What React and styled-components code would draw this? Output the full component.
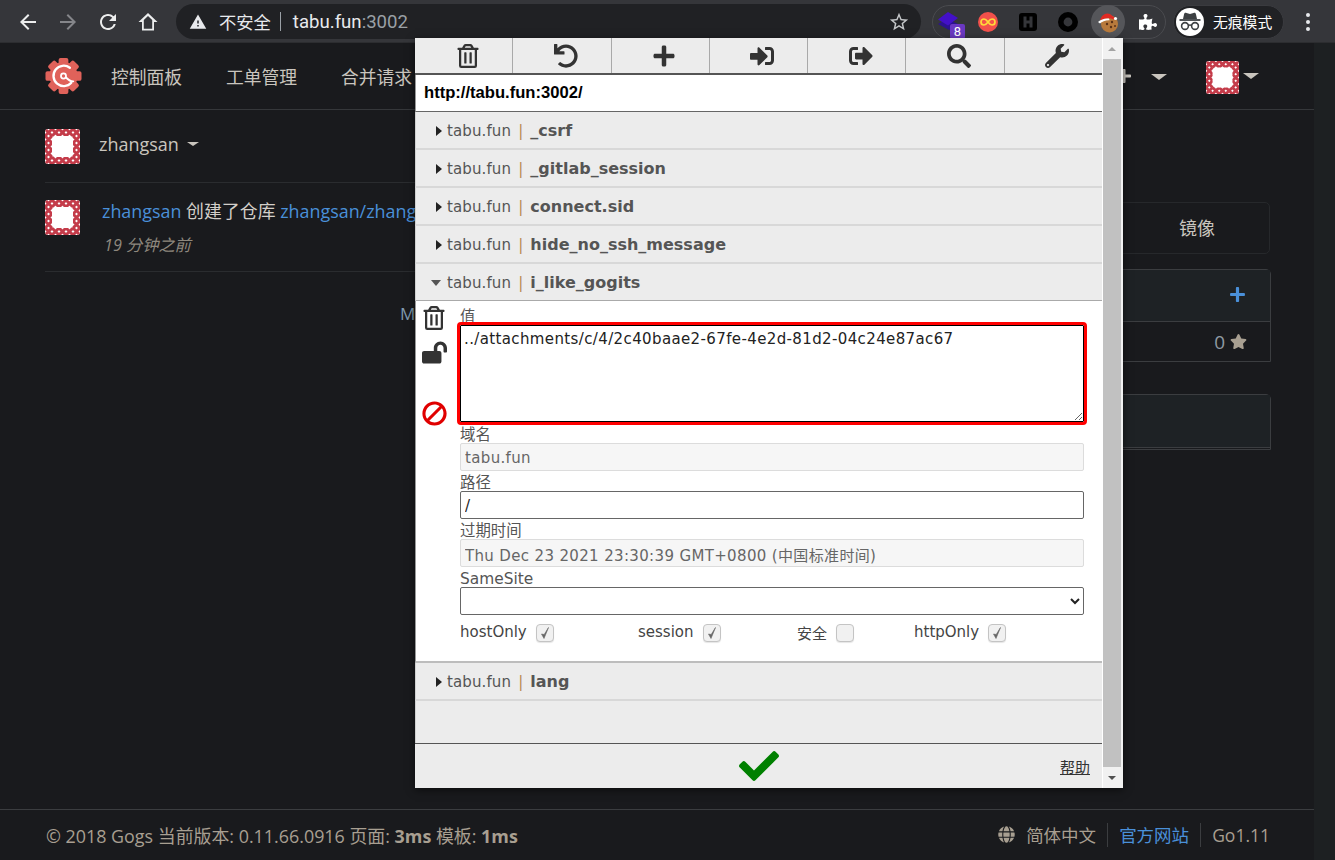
import React from "react";
import styled, { createGlobalStyle } from "styled-components";
import { MdArrowBack, MdArrowForward, MdRefresh, MdWarning, MdStarBorder } from "react-icons/md";
import {
  FaRegTrashAlt, FaUndo, FaPlus, FaSignInAlt, FaSignOutAlt, FaSearch, FaWrench,
  FaLockOpen, FaBan, FaCheck, FaGlobe, FaStar, FaPuzzlePiece,
} from "react-icons/fa";

const PAGE_FONT = '"Open Sans","Noto Sans CJK SC",sans-serif';
const UI_FONT = '"DejaVu Sans","Noto Sans CJK SC",sans-serif';

const Global = createGlobalStyle`
  html, body { margin: 0; padding: 0; background: #191a1d; }
  * { box-sizing: border-box; }
  body { font-family: ${PAGE_FONT}; overflow: hidden; }
`;

const Screen = styled.div`
  position: relative; width: 1335px; height: 860px; overflow: hidden;
  display: flex; flex-direction: column; background: #191a1d;
`;

/* browser chrome */
const Toolbar = styled.div`
  height: 43px; flex: none; background: #35363a; display: flex; align-items: center; color: #fff;
  padding-left: 16px; box-shadow: inset 0 -1px 0 #2c2d30;
`;
const NavBtn = styled.span`
  width: 24px; height: 24px; margin-right: ${(p) => p.$mr || 16}px; display: flex;
  color: ${(p) => (p.$dim ? "#85868a" : "#eceded")}; font-size: 24px;
`;
const Omni = styled.div`
  width: 745px; height: 35px; border-radius: 18px; background: #202124;
  display: flex; align-items: center; padding-left: 13px; font-size: 18.6px; color: #e8eaed;
  font-family: "Roboto","Noto Sans CJK SC",sans-serif; flex: none;
`;
const OmniSep = styled.span`width: 1px; height: 19px; background: #9aa0a6; margin: 0 12px 0 9px;`;
const OmniPort = styled.span`color: #9aa0a6;`;
const OmniLabel = styled.span`margin-left: 12px; font-size: 17.3px;`;
const OmniStar = styled.span`margin-left: auto; margin-right: 11px; display: flex; font-size: 22px; color: #c4c7c9;`;
const ExtPill = styled.div`
  width: 234px; height: 34px; margin-left: 11px; border: 1px solid #4a4b4f; border-radius: 17px;
  display: flex; align-items: center; flex: none;
`;
const ExtSlot = styled.span`
  position: relative; width: 40px; height: 34px; display: flex; align-items: center; justify-content: center; flex: none;
  &:first-child { margin-left: -5px; }
`;
const ExtActive = styled.span`
  width: 34px; height: 34px; border-radius: 50%; background: #55565a; display: flex; align-items: center; justify-content: center;
`;
const Badge = styled.span`
  position: absolute; left: 22px; top: 19px; width: 15px; height: 15px; background: #6a38c2; color: #fff;
  font: 13px/15px "Roboto",sans-serif; text-align: center; border-radius: 2px;
`;
const IncogPill = styled.div`
  width: 111px; height: 34px; margin-left: 7px; border-radius: 17px; background: #202124; border: 1px solid #3a3b3f;
  display: flex; align-items: center; padding-left: 2px; color: #fff; font-size: 14.8px; flex: none;
  font-family: "Noto Sans CJK SC",sans-serif;
`;
const IncogFace = styled.span`
  width: 28px; height: 28px; border-radius: 50%; background: #fff; display: flex; align-items: center; justify-content: center; margin-right: 9px;
`;
const Kebab = styled.span`
  margin-left: 22px; display: flex; flex-direction: column; gap: 3px;
  & i { display: block; width: 4px; height: 4px; border-radius: 50%; background: #e8eaed; }
`;

/* page */
const Body = styled.div`flex: 1; display: flex; min-height: 0;`;
const Main = styled.div`flex: 1; display: flex; flex-direction: column; min-width: 0;`;
const PageScroll = styled.div`width: 21px; flex: none; background: #1d2022;`;
const Header = styled.div`
  height: 67px; flex: none; border-bottom: 1px solid #35373a; display: flex; align-items: center; padding: 0 0 0 45px;
  color: #c9c5be; position: relative;
`;
const NavItem = styled.span`width: 115px; font-size: 17.8px; flex: none; white-space: nowrap; font-family: "Noto Sans CJK SC",sans-serif;`;
const LogoBox = styled.span`width: 66px; flex: none; display: flex;`;
const RightNav = styled.div`margin-left: auto; display: flex; align-items: center; padding-right: 55px;`;
const Caret = styled.i`
  display: block; width: 0; height: 0; border-left: ${(p) => p.$s || 8}px solid transparent; border-right: ${(p) => p.$s || 8}px solid transparent;
  border-top: ${(p) => (p.$s || 8) * 0.8}px solid ${(p) => p.$c || "#c9c5be"};
`;
const PlusMark = styled.span`display: flex; color: #c9c5be; font-size: 16px; margin-right: 15px;`;
const Spacer = styled.span`width: ${(p) => p.$w}px; flex: none;`;
const NudgedCaret = styled.span`margin-left: 4px; margin-top: ${(p) => p.$mt || 0}px;`;
const AvatarSlot = styled.span`display: flex; margin-top: 3px;`;

const Content = styled.div`flex: 1; display: flex; padding: 0 43px 0 45px; gap: 16px; min-height: 0;`;
const LeftCol = styled.div`width: 790px; flex: none;`;
const RightCol = styled.div`flex: 1; padding-top: 92px;`;
const UserRow = styled.div`
  height: 73px; padding-top: 19px; border-bottom: 1px solid #2a2c2f; display: flex; align-items: flex-start; color: #c9c5be; font-size: 18px;
`;
const UserName = styled.span`margin: 1px 8px 0 19px; line-height: 28px;`;
const UserCaret = styled.span`margin-top: 13px;`;
const FeedRow = styled.div`height: 89px; padding-top: 17px; border-bottom: 1px solid #2a2c2f; display: flex;`;
const FeedText = styled.div`margin: -2px 0 0 22px; white-space: nowrap; color: #d3cfc9;`;
const FeedLine = styled.div`font-size: 17.9px; line-height: 26px;`;
const FeedTime = styled.div`font-size: 16.2px; line-height: 22px; margin: 10px 0 0 2px; font-style: italic; color: #8e887e;`;
const Link = styled.span`color: #4a90d9;`;
const More = styled.div`padding: 31px 0 0 355px; font-size: 17px; line-height: 22px; color: #7f99ad;`;
const TabBox = styled.div`
  height: 52px; margin-right: 1px; border: 1px solid #26282b; border-radius: 5px; display: flex; align-items: center; justify-content: flex-end;
  padding: 0 54px 2px 0; font-size: 18px; color: #c9c5be; font-family: "Noto Sans CJK SC",sans-serif;
`;
const Panel = styled.div`
  margin-top: ${(p) => p.$mt}px; border: 1px solid #3b3d40; border-radius: 5px 5px 0 0;
`;
const PanelHead = styled.div`
  height: ${(p) => p.$h}px; background: #1e2225; display: flex; align-items: center; justify-content: flex-end; padding: 0 24px 2px 0;
  color: #4a90d9; font-size: 17px;
`;
const PanelRow = styled.div`
  height: 40px; border-top: 1px solid #3b3d40; display: flex; align-items: center; justify-content: flex-end; padding-right: 23px;
  gap: 5px; color: #8f9aa3; font-size: 19px;
  & svg { color: #a89f91; }
`;
const PanelTail = styled.div`height: 2px; border-top: 1px solid #3b3d40;`;
const Footer = styled.div`
  height: 51px; flex: none; border-top: 1px solid #3b3d40; padding: 0 44px 1px 46px; display: flex; align-items: center;
  justify-content: space-between; font-size: 17.9px; color: #a89f91;
`;
const FootRight = styled.div`display: flex; align-items: center; font-size: 17.5px;`;
const FootCell = styled.span`
  display: flex; align-items: center; gap: 11px; padding: 0 11px; height: 24px;
  & + & { border-left: 1px solid #3b3d40; }
  &:last-child { padding-right: 0; }
`;

/* cookie editor popup */
const Popup = styled.div`
  position: absolute; left: 415px; top: 38px; width: 708px; height: 750px; display: flex; background: #ececec;
  box-shadow: 0 2px 8px rgba(0,0,0,.55); font-family: ${UI_FONT}; color: #333; font-size: 15px;
`;
const PopupMain = styled.div`flex: 1; min-width: 0; display: flex; flex-direction: column;`;
const Tools = styled.div`height: 37px; flex: none; display: flex; border-bottom: 2px solid #555;`;
const Tool = styled.span`
  flex: 1; display: flex; align-items: center; justify-content: center; padding: 0 0 0 8px; color: #333; font-size: ${(p) => p.$s || 24}px;
  & + & { border-left: 1px solid #a9a9a9; }
`;
const UrlBar = styled.div`
  height: 37px; flex: none; background: #fff; border-bottom: 1px solid #666; padding-left: 8px; display: flex; align-items: center;
  font: bold 16.6px "Liberation Sans",Arial,sans-serif; color: #000; border-left: 1px solid #999;
`;
const Row = styled.div`
  height: ${(p) => (p.$open ? 37 : 38)}px; flex: none; display: flex; align-items: center; color: #555; letter-spacing: .12px;
  border-bottom: ${(p) => (p.$open ? "1px solid #aaa" : "2px solid #d8d8d8")};
  border-left: 1px solid #d0d0d0; padding-left: ${(p) => (p.$open ? 15 : 20)}px; padding-top: 1px;
`;
const RightTri = styled.i`
  width: 0; height: 0; border-top: 5px solid transparent; border-bottom: 5px solid transparent; border-left: 6px solid #222; margin-right: 5px;
`;
const DownTri = styled.i`
  width: 0; height: 0; border-left: 5px solid transparent; border-right: 5px solid transparent; border-top: 6px solid #555; margin-right: 6px;
`;
const Sep = styled.span`color: #b9894f; margin: 0 7px 0 7px;`;
const CookieName = styled.b`font-weight: 700; color: #555; font-size: 16px; letter-spacing: 0;`;
const Expanded = styled.div`
  height: 362px; flex: none; background: #fff; display: flex; padding: 5px 18px 0 6px; border-bottom: 2px solid #bdbdbd; border-left: 1px solid #999;
`;
const SideIcons = styled.div`width: 38px; flex: none; display: flex; flex-direction: column; align-items: flex-start;`;
const SideIcon = styled.span`
  display: flex; margin-top: ${(p) => p.$mt || 0}px; font-size: ${(p) => p.$s}px; color: ${(p) => p.$c || "#333"};
  transform: ${(p) => (p.$flip ? "scaleX(-1)" : "none")};
`;
const Form = styled.div`flex: 1; min-width: 0;`;
const Label = styled.div`height: 19px; line-height: 22px; font-size: 15.4px; color: #555;`;
const TextBox = styled.input`
  display: block; width: 100%; height: 28px; margin: 0 0 1px; padding: 2px 4px 0; font: 15px ${UI_FONT}; letter-spacing: .35px; border-radius: 2px;
  border: 1px solid ${(p) => (p.$muted ? "#dcdcdc" : "#666")};
  background: ${(p) => (p.$muted ? "#f6f6f6" : "#fff")};
  color: ${(p) => (p.$muted ? "#666" : "#222")};
  outline: none;
`;
const ValueBox = styled.textarea`
  display: block; width: 100%; height: 97px; margin: 0 0 2px; padding: 4px 3px; font: 15px/19px ${UI_FONT}; letter-spacing: .375px; color: #222;
  border: 1px solid #000; border-radius: 1px; outline: 3px solid #f00; background: #fff; resize: both;
`;
const SameSite = styled.select`
  display: block; width: 100%; height: 28px; font: 15px ${UI_FONT}; border: 1px solid #666; border-radius: 2px; background: #fff; color: #222;
`;
const Checks = styled.div`display: flex; margin-top: 7px; height: 20px; align-items: center;`;
const CheckItem = styled.span`
  width: ${(p) => p.$w}px; flex: none; display: flex; align-items: center; gap: 9px; font-size: 15px; color: #444;
`;
const CheckBox = styled.span`
  width: 18px; height: 18px; margin-top: 2px; border: 1px solid #c4c4c4; border-radius: 4px; background: #f1f1f1; display: flex; align-items: center; justify-content: center;
  color: #666; box-shadow: 0 1px 1px rgba(0,0,0,.1);
`;
const Filler = styled.div`flex: 1; border-left: 1px solid #d0d0d0;`;
const PopFooter = styled.div`
  height: 45px; flex: none; border-top: 1px solid #555; display: flex; align-items: center; justify-content: center; position: relative; color: #008000; font-size: 40px;
`;
const Help = styled.span`
  position: absolute; right: 12px; top: 15px; font-size: 15px; color: #333; text-decoration: underline; line-height: 18px;
`;
const Scroll = styled.div`
  width: 21px; flex: none; background: #f1f1f1; border-left: 1px solid #fff; display: flex; flex-direction: column; align-items: stretch; padding-right: 2px;
`;
const ArrowCell = styled.div`height: 21px; flex: none; display: flex; align-items: center; justify-content: center;`;
const ArrowUp = styled.i`width: 0; height: 0; border-left: 4px solid transparent; border-right: 4px solid transparent; border-bottom: 4px solid #a3a3a3;`;
const ArrowDown = styled.i`width: 0; height: 0; border-left: 4px solid transparent; border-right: 4px solid transparent; border-top: 4px solid #505050;`;
const Thumb = styled.div`flex: 1; background: #c1c1c1;`;

const Avatar = ({ size = 35 }) => {
  const cells = [];
  for (let y = 0; y < 5; y++) for (let x = 0; x < 5; x++) {
    if (x === 0 || y === 0 || x === 4 || y === 4) {
      cells.push(
        <path key={`${x}-${y}`} d={`M${x * 7} ${y * 7}L${x * 7 + 7} ${y * 7 + 7}M${x * 7 + 7} ${y * 7}L${x * 7} ${y * 7 + 7}`} stroke="#c43c4a" strokeWidth="3" />
      );
    }
  }
  return (
    <svg width={size} height={size} viewBox="0 0 35 35" style={{ flex: "none", display: "block" }}>
      <defs><clipPath id="avclip"><rect width="35" height="35" rx="3" /></clipPath></defs>
      <g clipPath="url(#avclip)">
        <rect width="35" height="35" fill="#fff" />
        {cells}
        <rect x="7" y="7" width="21" height="21" rx="4" fill="#fff" />
      </g>
    </svg>
  );
};

const GogsLogo = () => {
  const teeth = [0, 45, 90, 135, 180, 225, 270, 315];
  return (
    <svg width="37" height="38" viewBox="0 0 38 38">
      <g fill="#e0625a">
        {teeth.map((a) => <rect key={a} x="14" y="0.5" width="10" height="10" rx="2" transform={`rotate(${a} 19 19)`} />)}
        <circle cx="19" cy="19" r="14.5" />
      </g>
      <path d="M25.500 10.500A10.500 10.500 0 1 0 27 26" fill="none" stroke="#fff" strokeWidth="2.4" strokeLinecap="round" />
      <path d="M29 24.500C26 24.500 23.500 22.500 21.500 20.500" fill="none" stroke="#fff" strokeWidth="2" strokeLinecap="round" />
      <circle cx="19" cy="19" r="2.600" fill="none" stroke="#fff" strokeWidth="1.800" />
    </svg>
  );
};

const Stack = () => (
  <svg width="22" height="24" viewBox="0 0 22 24">
    <path d="M1 14l9-5 11 5-9 6z" fill="#2c1290" />
    <path d="M1 9.5L11 2l10 6-10 7.5z" fill="#4310c8" />
  </svg>
);
const Infinity8 = () => (
  <svg width="20" height="20" viewBox="0 0 20 20">
    <circle cx="10" cy="10" r="10" fill="#f2504b" />
    <path d="M10 10c-1.6-2.2-2.7-3-4-3a3 3 0 0 0 0 6c1.3 0 2.4-.8 4-3s2.7-3 4-3a3 3 0 0 1 0 6c-1.3 0-2.4-.8-4-3z" fill="none" stroke="#ffd93a" strokeWidth="1.7" />
  </svg>
);
const HIcon = () => (
  <svg width="18" height="18" viewBox="0 0 18 18">
    <path fillRule="evenodd" fill="#000" d="M3 0h12a3 3 0 0 1 3 3v12a3 3 0 0 1-3 3H3a3 3 0 0 1-3-3V3a3 3 0 0 1 3-3zm1.5 3.500v11h3v-4h3v4h3v-11h-3v4h-3v-4z" />
  </svg>
);
const Ring = () => (
  <svg width="20" height="20" viewBox="0 0 20 20"><circle cx="10" cy="10" r="7.2" fill="none" stroke="#000" strokeWidth="5.6" /></svg>
);
const Cookie = () => (
  <svg width="22" height="22" viewBox="0 0 22 22">
    <circle cx="12.5" cy="13" r="8.5" fill="#b87a3c" />
    <circle cx="10" cy="13" r="1.2" fill="#5a3218" /><circle cx="15" cy="11" r="1.2" fill="#5a3218" />
    <circle cx="14" cy="16" r="1.2" fill="#5a3218" /><circle cx="18" cy="15" r="1" fill="#5a3218" />
    <path d="M3 10C4 4 9 1 13 3l5 4-1 1.5C12 6.5 7 7 3 10z" fill="#e02a23" />
    <path d="M1 11c3-2.6 7-4 11-3.4l.6 1.6C8.5 9 5 10.5 3 12.6z" fill="#fff" />
    <circle cx="18.5" cy="7.5" r="1.6" fill="#fff" />
  </svg>
);
const Incog = () => (
  <svg width="24" height="22" viewBox="0 0 24 22" fill="none">
    <path d="M6 3.5C6.3 2 7 1.5 8.5 2l3.5 1 3.5-1c1.5-.5 2.2 0 2.5 1.5L19 8H5z" fill="#3c4043" />
    <path d="M1.500 9h21" stroke="#3c4043" strokeWidth="1.8" />
    <circle cx="7" cy="15" r="3.4" stroke="#3c4043" strokeWidth="1.6" />
    <circle cx="17" cy="15" r="3.4" stroke="#3c4043" strokeWidth="1.6" />
    <path d="M10.400 14.500c1-.6 2.2-.6 3.2 0" stroke="#3c4043" strokeWidth="1.4" />
  </svg>
);
const HomeIcon = () => (
  <svg width="24" height="24" viewBox="0 0 24 24">
    <path fillRule="evenodd" fill="currentColor" d="M12 3L2.500 12H6v8.500h12V12h3.500zM12 5.900l4.200 4V18.700H7.800V9.900z" />
  </svg>
);
const SmallCheck = () => (
  <svg width="10" height="14" viewBox="0 0 10 14"><path d="M1.500 8L4 12.500 8.500 1.500 4.200 8.500z" fill="currentColor" stroke="currentColor" strokeWidth=".6" /></svg>
);

const COOKIES_BEFORE = ["_csrf", "_gitlab_session", "connect.sid", "hide_no_ssh_message"];

const CookieRow = ({ name, open }) => (
  <Row $open={open}>
    {open ? <DownTri /> : <RightTri />}
    tabu.fun<Sep>|</Sep><CookieName>{name}</CookieName>
  </Row>
);

export default function App() {
  return (
    <Screen>
      <Global />
      <Toolbar>
        <NavBtn><MdArrowBack /></NavBtn>
        <NavBtn $dim><MdArrowForward /></NavBtn>
        <NavBtn><MdRefresh /></NavBtn>
        <NavBtn $mr={16}><HomeIcon /></NavBtn>
        <Omni>
          <MdWarning size={18} />
          <OmniLabel>不安全</OmniLabel>
          <OmniSep />
          <span>tabu.fun<OmniPort>:3002</OmniPort></span>
          <OmniStar><MdStarBorder /></OmniStar>
        </Omni>
        <ExtPill>
          <ExtSlot><Stack /><Badge>8</Badge></ExtSlot>
          <ExtSlot><Infinity8 /></ExtSlot>
          <ExtSlot><HIcon /></ExtSlot>
          <ExtSlot><Ring /></ExtSlot>
          <ExtSlot><ExtActive><Cookie /></ExtActive></ExtSlot>
          <ExtSlot><FaPuzzlePiece size={18} color="#fff" /></ExtSlot>
        </ExtPill>
        <IncogPill>
          <IncogFace><Incog /></IncogFace>
          无痕模式
        </IncogPill>
        <Kebab><i /><i /><i /></Kebab>
      </Toolbar>
      <Body>
        <Main>
          <Header>
            <LogoBox><GogsLogo /></LogoBox>
            <NavItem>控制面板</NavItem>
            <NavItem>工单管理</NavItem>
            <NavItem>合并请求</NavItem>
            <RightNav>
              <PlusMark><FaPlus /></PlusMark>
              <NudgedCaret $mt={1}><Caret /></NudgedCaret>
              <Spacer $w={39} />
              <AvatarSlot><Avatar size={33} /></AvatarSlot>
              <NudgedCaret><Caret /></NudgedCaret>
            </RightNav>
          </Header>
          <Content>
            <LeftCol>
              <UserRow>
                <Avatar />
                <UserName>zhangsan</UserName>
                <UserCaret><Caret $s={6} /></UserCaret>
              </UserRow>
              <FeedRow>
                <Avatar />
                <FeedText>
                  <FeedLine><Link>zhangsan</Link> 创建了仓库 <Link>zhangsan/zhangsan</Link></FeedLine>
                  <FeedTime>19 分钟之前</FeedTime>
                </FeedText>
              </FeedRow>
              <More>More</More>
            </LeftCol>
            <RightCol>
              <TabBox>镜像</TabBox>
              <Panel $mt={15}>
                <PanelHead $h={51}><FaPlus /></PanelHead>
                <PanelRow>0 <FaStar size={17} /></PanelRow>
              </Panel>
              <Panel $mt={32}>
                <PanelHead $h={52} />
                <PanelTail />
              </Panel>
            </RightCol>
          </Content>
          <Footer>
            <span>© 2018 Gogs 当前版本: 0.11.66.0916 页面: <b>3ms</b> 模板: <b>1ms</b></span>
            <FootRight>
              <FootCell><FaGlobe size={17} />简体中文</FootCell>
              <FootCell><Link>官方网站</Link></FootCell>
              <FootCell>Go1.11</FootCell>
            </FootRight>
          </Footer>
        </Main>
        <PageScroll />
      </Body>

      <Popup>
        <PopupMain>
          <Tools>
            <Tool><FaRegTrashAlt /></Tool>
            <Tool><FaUndo /></Tool>
            <Tool><FaPlus /></Tool>
            <Tool><FaSignInAlt /></Tool>
            <Tool><FaSignOutAlt /></Tool>
            <Tool><FaSearch /></Tool>
            <Tool><FaWrench /></Tool>
          </Tools>
          <UrlBar>http://tabu.fun:3002/</UrlBar>
          {COOKIES_BEFORE.map((n) => <CookieRow key={n} name={n} />)}
          <CookieRow name="i_like_gogits" open />
          <Expanded>
            <SideIcons>
              <SideIcon $s={24}><FaRegTrashAlt /></SideIcon>
              <SideIcon $s={25} $mt={10}><FaLockOpen /></SideIcon>
              <SideIcon $s={25} $mt={36} $c="#e00000" $flip><FaBan /></SideIcon>
            </SideIcons>
            <Form>
              <Label>值</Label>
              <ValueBox readOnly defaultValue="../attachments/c/4/2c40baae2-67fe-4e2d-81d2-04c24e87ac67" />
              <Label>域名</Label>
              <TextBox $muted readOnly value="tabu.fun" />
              <Label>路径</Label>
              <TextBox readOnly value="/" />
              <Label>过期时间</Label>
              <TextBox $muted readOnly value="Thu Dec 23 2021 23:30:39 GMT+0800 (中国标准时间)" />
              <Label>SameSite</Label>
              <SameSite><option></option></SameSite>
              <Checks>
                <CheckItem $w={178}>hostOnly <CheckBox><SmallCheck /></CheckBox></CheckItem>
                <CheckItem $w={159}>session <CheckBox><SmallCheck /></CheckBox></CheckItem>
                <CheckItem $w={117}>安全 <CheckBox /></CheckItem>
                <CheckItem $w={100}>httpOnly <CheckBox><SmallCheck /></CheckBox></CheckItem>
              </Checks>
            </Form>
          </Expanded>
          <CookieRow name="lang" />
          <Filler />
          <PopFooter>
            <FaCheck />
            <Help>帮助</Help>
          </PopFooter>
        </PopupMain>
        <Scroll>
          <ArrowCell><ArrowUp /></ArrowCell>
          <Thumb />
          <ArrowCell><ArrowDown /></ArrowCell>
        </Scroll>
      </Popup>
    </Screen>
  );
}
